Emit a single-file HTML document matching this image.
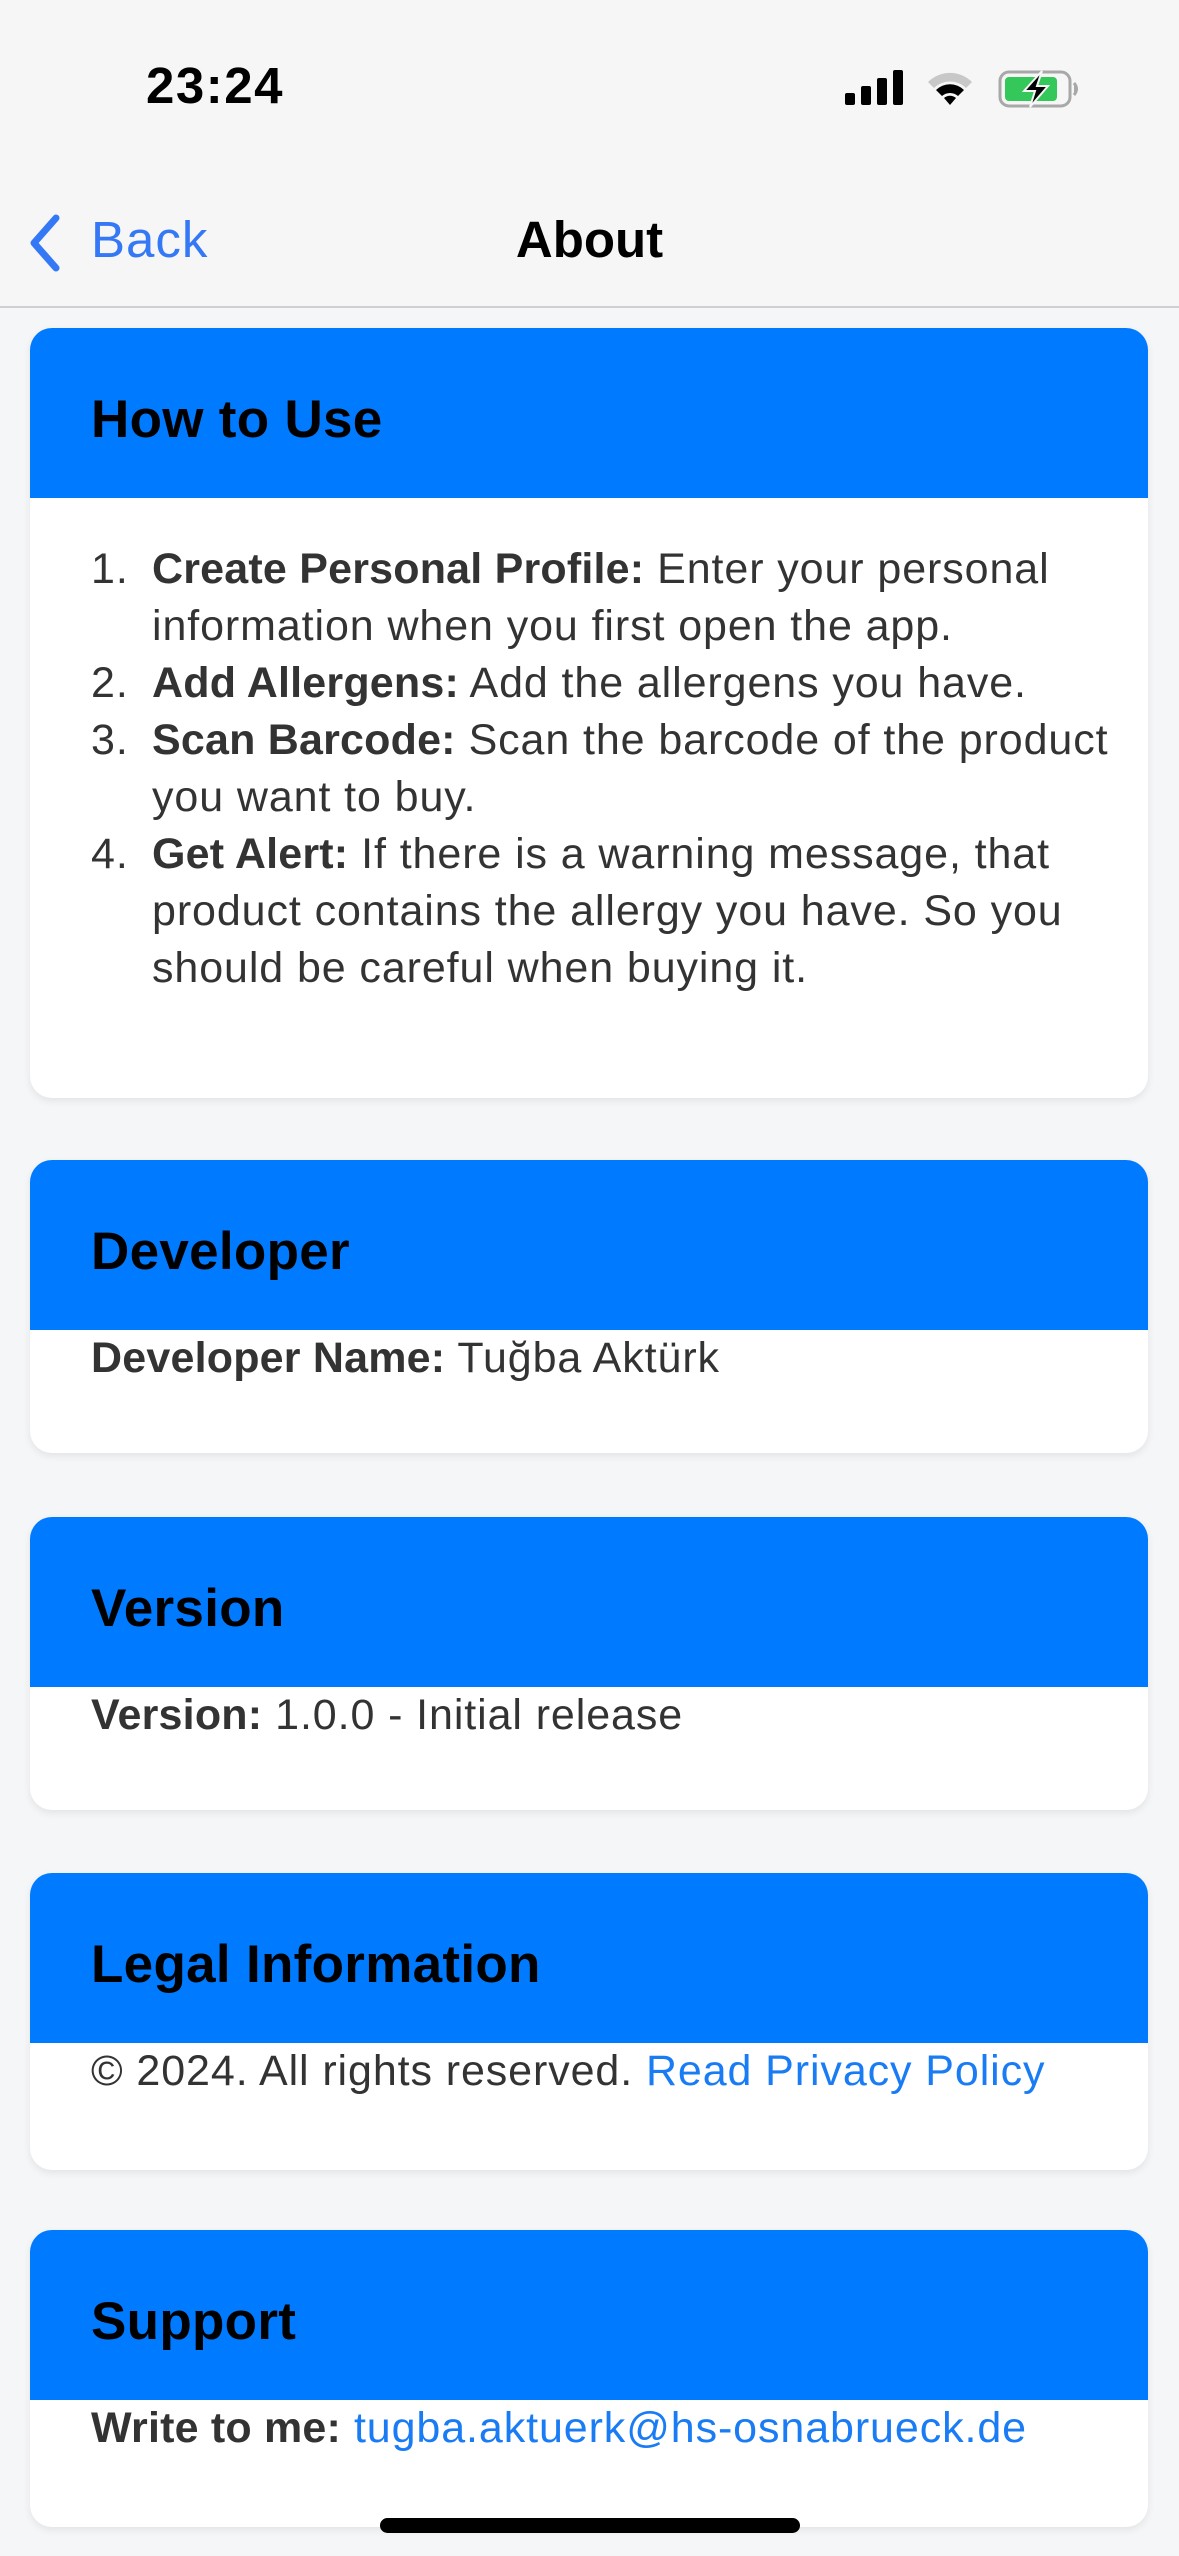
<!DOCTYPE html>
<html><head><meta charset="utf-8"><style>
*{margin:0;padding:0;box-sizing:border-box}
body{width:1179px;height:2556px;background:#f5f6f8;font-family:"Liberation Sans",sans-serif;position:relative;overflow:hidden}
.top{position:absolute;left:0;top:0;width:1179px;height:308px;background:#f6f6f6;border-bottom:2px solid #cfcfd2}
.time{position:absolute;left:146px;top:56px;font-size:51px;font-weight:bold;color:#000;letter-spacing:1.5px}
.back{position:absolute;left:91px;top:210px;font-size:51px;color:#3478f6;letter-spacing:1px}
.title{position:absolute;left:0;width:1179px;text-align:center;top:210px;font-size:51px;font-weight:bold;color:#000}
.card{position:absolute;left:30px;width:1118px;background:#fff;border-radius:22px;overflow:hidden;box-shadow:0 3px 8px rgba(0,0,0,0.08)}
.hd{height:170px;background:#007aff;color:#000;font-weight:bold;font-size:53px;padding-left:61px;line-height:184px;letter-spacing:0.3px}
.bd{font-size:43px;color:#333;padding-left:61px;line-height:57px;letter-spacing:0.9px;white-space:nowrap}
.bd b{color:#333;letter-spacing:0.2px}
a{color:#1a7cf5;text-decoration:none}
.li{position:relative;padding-left:61px}
.li span.n{position:absolute;left:0}
.home{position:absolute;left:380px;top:2518px;width:420px;height:15px;border-radius:8px;background:#000}
</style></head><body>
<div class="top">
<div class="time">23:24</div>
<svg style="position:absolute;left:845px;top:70px" width="60" height="35" viewBox="0 0 60 35"><rect x="0" y="23" width="10" height="12" rx="2"/><rect x="16" y="16" width="10" height="19" rx="2"/><rect x="32" y="8" width="10" height="27" rx="2"/><rect x="48" y="0" width="10" height="35" rx="2"/></svg>
<svg style="position:absolute;left:925px;top:70px" width="50" height="36" viewBox="0 0 50 36"><path d="M3 12 A31 31 0 0 1 47 12 L41 18 A23 23 0 0 0 9 18 Z" fill="#c8c8c8"/><path d="M11 20 A20 20 0 0 1 39 20 L33 26 A12 12 0 0 0 17 26 Z" fill="#000"/><path d="M19 28 A9 9 0 0 1 31 28 L25 35 Z" fill="#000"/></svg>
<svg style="position:absolute;left:998px;top:70px" width="84" height="38" viewBox="0 0 84 38"><rect x="2" y="2" width="70" height="34" rx="9" fill="none" stroke="#a8a8a8" stroke-width="3"/><rect x="7" y="7" width="52" height="24" rx="4" fill="#34c759"/><path d="M76 13 q5 6 0 12" fill="#a8a8a8" stroke="#a8a8a8" stroke-width="3"/><path d="M44 1 L26 21 L37 21 L32 37 L50 16 L39 16 Z" fill="#000" stroke="#f6f6f6" stroke-width="2"/></svg>
<svg style="position:absolute;left:26px;top:214px" width="36" height="58" viewBox="0 0 36 58"><path d="M30 4 L8 29 L30 54" fill="none" stroke="#3478f6" stroke-width="7" stroke-linecap="round" stroke-linejoin="round"/></svg>
<div class="back">Back</div>
<div class="title">About</div>
</div>

<div class="card" style="top:328px;height:770px">
<div class="hd">How to Use</div>
<div class="bd" style="padding-top:43px;padding-left:61px">
<div class="li"><span class="n">1.</span><b>Create Personal Profile:</b> Enter your personal<br>information when you first open the app.</div>
<div class="li"><span class="n">2.</span><b>Add Allergens:</b> Add the allergens you have.</div>
<div class="li"><span class="n">3.</span><b>Scan Barcode:</b> Scan the barcode of the product<br>you want to buy.</div>
<div class="li"><span class="n">4.</span><b>Get Alert:</b> If there is a warning message, that<br>product contains the allergy you have. So you<br>should be careful when buying it.</div>
</div></div>

<div class="card" style="top:1160px;height:293px">
<div class="hd">Developer</div>
<div class="bd"><b>Developer Name:</b> Tuğba Aktürk</div></div>

<div class="card" style="top:1517px;height:293px">
<div class="hd">Version</div>
<div class="bd"><b>Version:</b> 1.0.0 - Initial release</div></div>

<div class="card" style="top:1873px;height:297px">
<div class="hd">Legal Information</div>
<div class="bd">© 2024. All rights reserved. <a>Read Privacy Policy</a></div></div>

<div class="card" style="top:2230px;height:297px">
<div class="hd">Support</div>
<div class="bd"><b>Write to me:</b> <a>tugba.aktuerk@hs-osnabrueck.de</a></div></div>

<div class="home"></div>
</body></html>
